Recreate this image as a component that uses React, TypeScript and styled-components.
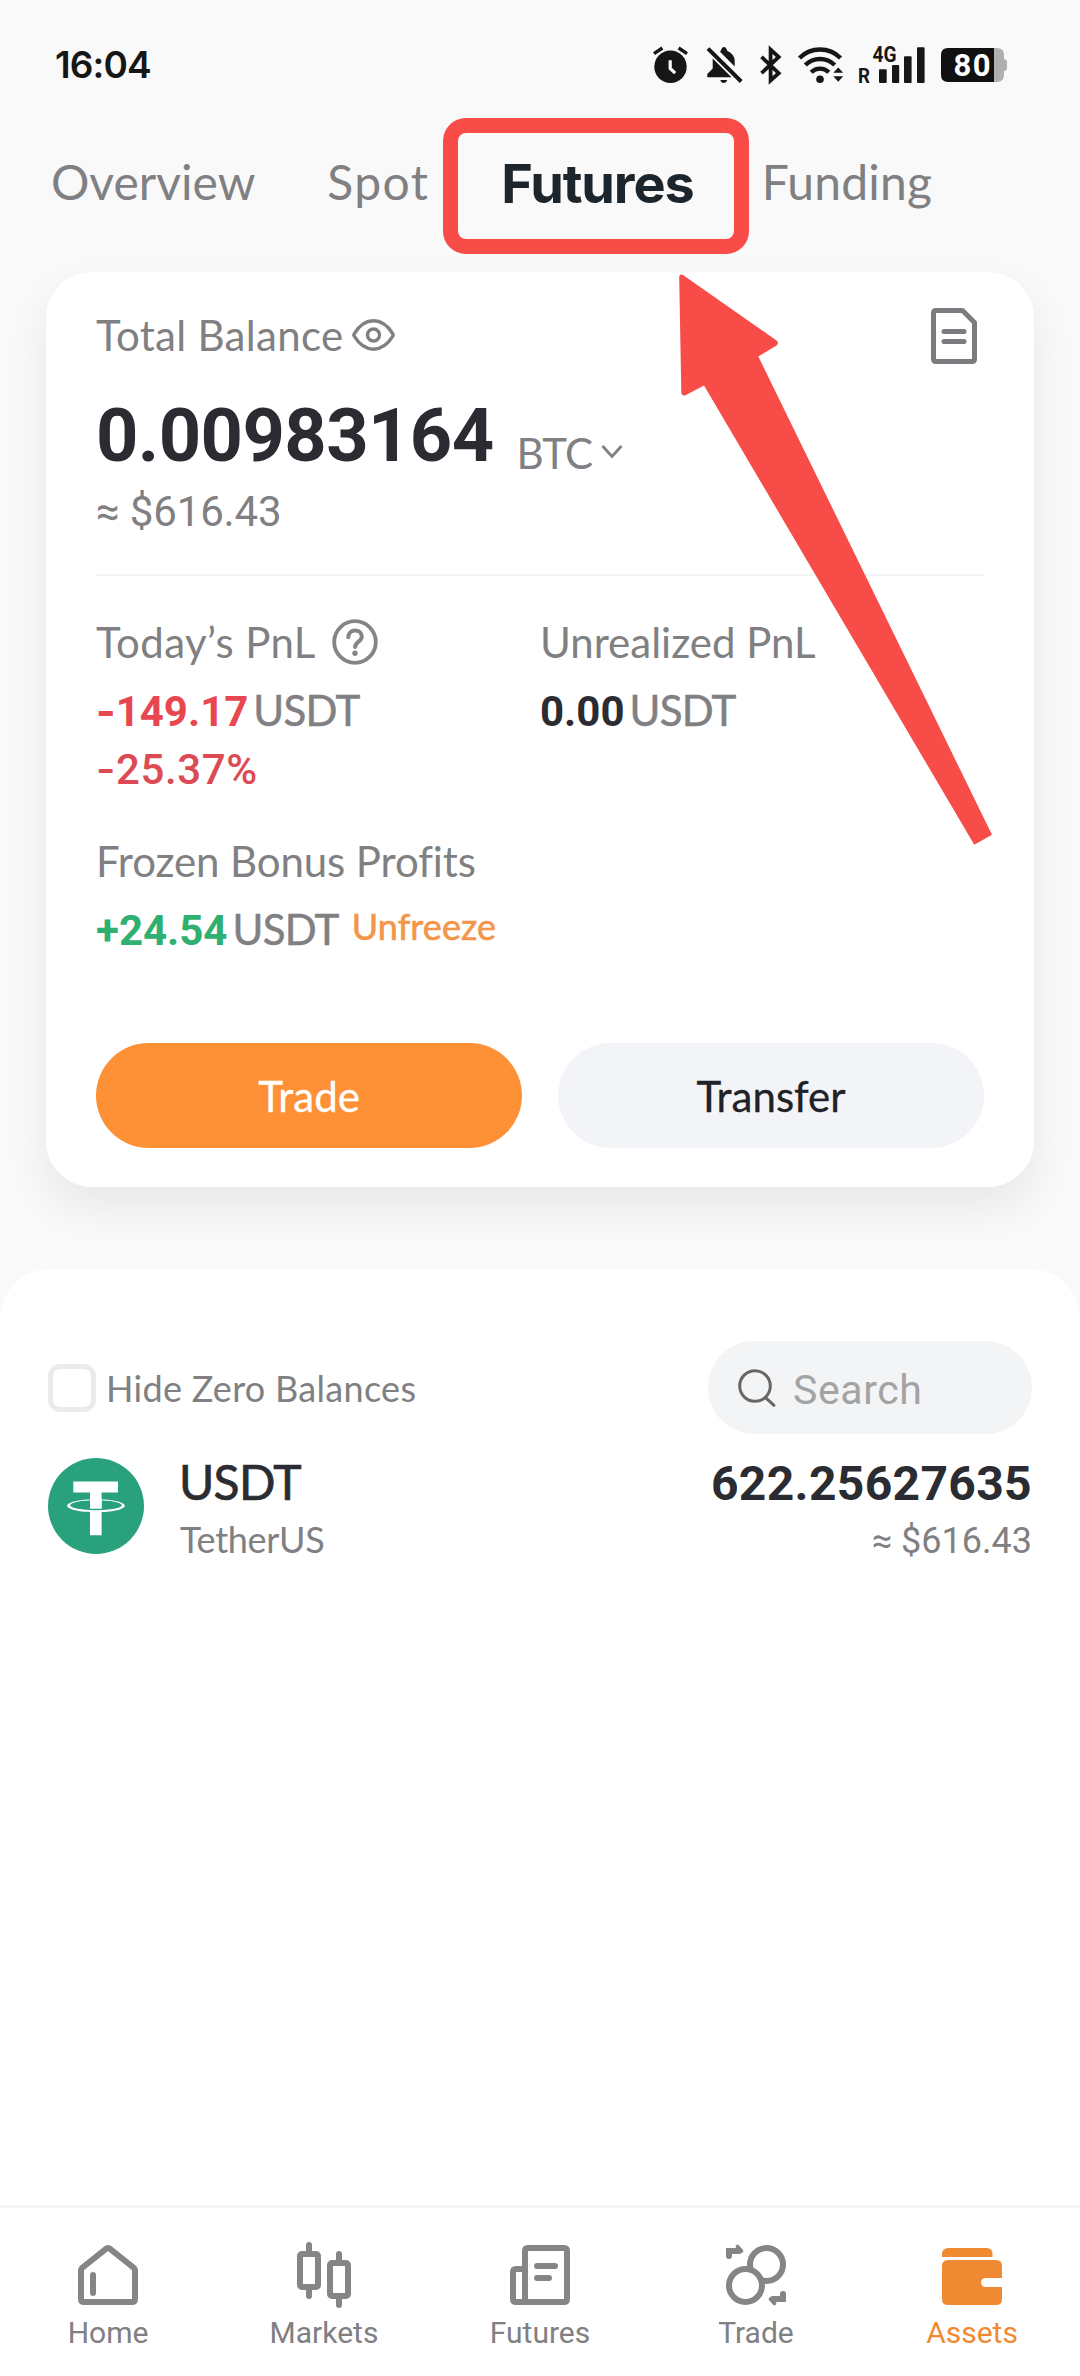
import React from "react";
import styled, { createGlobalStyle } from "styled-components";

const UI = `Lato, "Open Sans", sans-serif`;
const NUM = `Roboto, "Open Sans", sans-serif`;
const STRONG = `Inter, Roboto, sans-serif`;

const color = {
  ink: "#2b2c31",
  muted: "#808082",
  red: "#e8474f",
  green: "#2fb070",
  orange: "#fe9135",
  mark: "#f84c48",
  chip: "#f3f4f6",
};

const GlobalStyle = createGlobalStyle`
  *, *::before, *::after { box-sizing: border-box; }
  body { margin: 0; background: #f9f9f9; }
  button { border: 0; background: none; padding: 0; margin: 0; font: inherit; }
  svg { display: block; flex: none; overflow: visible; }
`;

const Screen = styled.div`
  position: relative;
  width: 1080px;
  height: 2376px;
  display: flex;
  flex-direction: column;
  overflow: hidden;
  background: #f9f9f9;
  font-family: ${UI};
  font-variant-ligatures: none;
  color: ${color.muted};
  white-space: nowrap;
`;

/* ---------- status bar ---------- */

const StatusBar = styled.header`
  flex: none;
  height: 130px;
  padding: 0 73px 0 55px;
  display: flex;
  align-items: center;
  justify-content: space-between;
  color: #161616;
`;

const Clock = styled.time`
  font-family: ${STRONG};
  font-size: 37px;
  font-weight: 600;
  line-height: 44px;
  letter-spacing: -0.9px;
`;

const StatusIcons = styled.div`
  display: flex;
  align-items: center;
`;

const StatusGlyph = styled.svg<{ $before?: number }>`
  margin-left: ${(p) => p.$before ?? 0}px;
`;

/* ---------- tabs ---------- */

const Tabs = styled.nav`
  flex: none;
  height: 104px;
  padding-left: 51px;
  display: flex;
  align-items: center;
  gap: 72px;
`;

const Tab = styled.button<{ $spacing?: number }>`
  font: 400 48px/60px ${UI};
  letter-spacing: ${(p) => p.$spacing ?? 0}px;
  color: ${color.muted};
`;

const ActiveTab = styled.button`
  position: relative;
  margin-right: -4px;
  padding-top: 3px;
  font: 700 54px/60px ${STRONG};
  letter-spacing: -1.1px;
  color: #1d252c;
`;

const HighlightFrame = styled.span`
  position: absolute;
  left: -58px;
  top: -33px;
  width: 306px;
  height: 136px;
  border: 15px solid ${color.mark};
  border-radius: 23px;
`;

/* ---------- balance card ---------- */

const Card = styled.section`
  flex: none;
  margin: 38px 46px 0;
  padding: 36px 50px 38px;
  height: 915px;
  display: flex;
  flex-direction: column;
  background: #fff;
  border-radius: 46px;
  box-shadow: 0 20px 42px rgba(0, 0, 0, 0.07);
`;

const CardHeader = styled.div`
  height: 56px;
  padding-right: 7px;
  display: flex;
  align-items: center;
  justify-content: space-between;
`;

const Label = styled.div<{ $spacing?: number; $gap?: number }>`
  display: flex;
  align-items: center;
  gap: ${(p) => p.$gap ?? 9}px;
  font-family: ${UI};
  font-size: 42px;
  line-height: 50px;
  letter-spacing: ${(p) => p.$spacing ?? 0}px;
`;

const HeaderLabel = styled(Label)`
  padding-bottom: 3px;
`;

const BalanceRow = styled.div`
  margin-top: 32px;
  height: 82px;
  display: flex;
  align-items: flex-end;
`;

const BalanceAmount = styled.div`
  padding-bottom: 2px;
  font: 700 74px/80px ${NUM};
  letter-spacing: -0.6px;
  color: ${color.ink};
`;

const CurrencySelect = styled.button`
  margin-left: 23px;
  display: flex;
  align-items: center;
  gap: 9px;
  font: 400 42px/50px ${UI};
  letter-spacing: -0.8px;
  color: ${color.muted};
`;

const FiatTotal = styled.div`
  margin-top: 9px;
  font: 400 42px/50px ${NUM};
  letter-spacing: -0.15px;
`;

const Divider = styled.hr`
  width: 100%;
  height: 2px;
  margin: 37px 0 41px;
  border: 0;
  background: #f3f4f5;
`;

const PnlGrid = styled.div`
  display: grid;
  grid-template-columns: 1fr 1fr;
`;

const ValueRow = styled.div`
  margin-top: 18px;
  height: 50px;
  display: flex;
  align-items: baseline;
`;

const Value = styled.span<{ $tone: string }>`
  font: 700 42px/50px ${NUM};
  color: ${(p) => p.$tone};
`;

const Unit = styled.span`
  margin-left: 5px;
  font: 400 42px/50px ${UI};
  letter-spacing: -0.7px;
  -webkit-text-stroke: 0.5px;
`;

const Sign = styled.span`
  font-family: ${STRONG};
`;

const Percent = styled.div`
  margin-top: 9px;
  font: 500 42px/50px ${NUM};
  letter-spacing: 0.6px;
  color: #dc4a53;
`;

const BonusBlock = styled.div`
  margin-top: 41px;
`;

const Unfreeze = styled.a`
  align-self: flex-start;
  margin: 3px 0 0 13px;
  font: 400 36px/39px ${UI};
  letter-spacing: 0.1px;
  -webkit-text-stroke: 0.6px;
  color: #f3964a;
`;

const Actions = styled.div`
  margin-top: 89px;
  display: grid;
  grid-template-columns: 1fr 1fr;
  gap: 36px;
`;

const ActionButton = styled.button<{ $primary?: boolean }>`
  height: 105px;
  border-radius: 53px;
  background: ${(p) => (p.$primary ? color.orange : "#f3f4f7")};
  color: ${(p) => (p.$primary ? "#fff" : "#202227")};
  font: 400 42px/50px ${UI};
  -webkit-text-stroke: 0.3px;
`;

/* ---------- asset list ---------- */

const AssetPanel = styled.section`
  flex: 1;
  margin-top: 82px;
  padding: 72px 48px 0;
  background: #fff;
  border-radius: 50px 50px 0 0;
`;

const FilterRow = styled.div`
  height: 93px;
  display: flex;
  align-items: center;
  justify-content: space-between;
`;

const HideZero = styled.label`
  display: flex;
  align-items: center;
  gap: 10px;
  font: 400 36px/44px ${UI};
  letter-spacing: 0.3px;
`;

const CheckBox = styled.span`
  width: 48px;
  height: 48px;
  border: 5px solid #ebebeb;
  border-radius: 12px;
  background: #fff;
`;

const SearchBox = styled.div`
  width: 324px;
  height: 93px;
  padding-left: 30px;
  display: flex;
  align-items: center;
  gap: 17px;
  border-radius: 47px;
  background: ${color.chip};
`;

const SearchHint = styled.span`
  padding-top: 4px;
  font: 400 41px/48px ${NUM};
  letter-spacing: 0.6px;
  color: #a3a3a3;
`;

const AssetRow = styled.div`
  margin-top: 17px;
  height: 110px;
  display: flex;
  align-items: center;
`;

const AssetName = styled.div`
  margin-left: 35px;
  flex: 1;
  display: flex;
  flex-direction: column;
  gap: 5px;
`;

const Ticker = styled.span`
  font: 400 48px/60px ${UI};
  letter-spacing: -0.7px;
  -webkit-text-stroke: 0.7px;
  color: ${color.ink};
`;

const FullName = styled.span`
  padding-left: 1px;
  font: 400 36px/44px ${UI};
  letter-spacing: -0.3px;
`;

const Holdings = styled.div`
  padding-top: 4px;
  display: flex;
  flex-direction: column;
  align-items: flex-end;
  gap: 5px;
`;

const HoldingAmount = styled.span`
  font: 700 48px/60px ${NUM};
  letter-spacing: 0.35px;
  color: ${color.ink};
`;

const HoldingFiat = styled.span`
  font: 400 36px/44px ${NUM};
`;

/* ---------- bottom navigation ---------- */

const BottomNav = styled.nav`
  flex: none;
  height: 171px;
  padding-top: 37px;
  display: grid;
  grid-template-columns: repeat(5, 1fr);
  border-top: 3px solid #f4f4f4;
  background: #fff;
`;

const NavItem = styled.button<{ $active?: boolean }>`
  display: flex;
  flex-direction: column;
  align-items: center;
  gap: 10px;
  font: 400 30px/36px ${NUM};
  color: ${(p) => (p.$active ? "#ef8a33" : color.muted)};
`;

/* ---------- pointer drawn over the card ---------- */

const Pointer = styled.svg`
  position: absolute;
  left: 680px;
  top: 274px;
  pointer-events: none;
`;

/* ---------- icons ---------- */

const AlarmIcon = () => (
  <StatusGlyph width="35" height="36" viewBox="0 0 35 36" fill="none">
    <circle cx="17.5" cy="19.8" r="16.2" fill="#161616" />
    <path d="M1 6.6 9.4 1M34 6.6 25.6 1" stroke="#161616" strokeWidth="3.4" />
    <path d="M17.2 13.3v8.2l5 4.6" stroke="#f9f9f9" strokeWidth="3.2" />
  </StatusGlyph>
);

const BellOffIcon = () => (
  <StatusGlyph $before={19} width="36" height="36" viewBox="0 0 36 36" fill="#161616">
    <path d="M5.7 11.5v10L.3 27v3.3h24.2zM13 4.7C14.5 3.8 14.3 0 17 0s2.5 3.5 4 4.3c4 2.2 6.7 5.2 6.7 9.7v5.6zM13.3 33h6.900c-.6 2-1.800 3-3.500 3s-2.800-1-3.400-3z" />
    <path d="M1 1.600 34.200 34.500" stroke="#161616" strokeWidth="4" />
  </StatusGlyph>
);

const BluetoothIcon = () => (
  <StatusGlyph $before={17} width="22" height="36" viewBox="0 0 22 36" fill="none">
    <path d="M1.500 9.800 18.700 26.200 10.600 33.500V2.500l8.100 7.500L1.500 26.200" stroke="#161616" strokeWidth="3.800" />
  </StatusGlyph>
);

const WifiIcon = () => (
  <StatusGlyph $before={16} width="46" height="36" viewBox="0 0 46 36" fill="#161616">
    <g fill="none" stroke="#161616" strokeWidth="4.400">
      <path d="M1.500 11a29 29 0 0 1 41 0" />
      <path d="M7.300 18a21 21 0 0 1 29.400 0" />
      <path d="M13.200 25.200a12.500 12.500 0 0 1 17.600 0" />
    </g>
    <circle cx="22" cy="32.300" r="3.800" />
    <path d="M35.300 25.800h9.900l-4.950-5.300zM35.300 29.200h9.900l-4.950 5.600z" />
  </StatusGlyph>
);

const SignalIcon = () => (
  <StatusGlyph $before={14} width="67" height="36" viewBox="0 0 67 36" fill="#161616">
    <text x="0" y="35.600" fontFamily="Roboto" fontWeight="700" fontSize="21" textLength="12" lengthAdjust="spacingAndGlyphs">R</text>
    <text x="14.500" y="15.200" fontFamily="Roboto" fontWeight="700" fontSize="21.500" textLength="24" lengthAdjust="spacingAndGlyphs">4G</text>
    <rect x="21" y="22.300" width="7.700" height="13.700" rx="1" />
    <rect x="34" y="18" width="7.200" height="18" rx="1" />
    <rect x="46" y="9.300" width="7.600" height="26.700" rx="1" />
    <rect x="59" y="0.300" width="7.600" height="35.700" rx="1" />
  </StatusGlyph>
);

const BatteryIcon = () => (
  <StatusGlyph $before={16} width="66" height="34" viewBox="0 0 66 34">
    <path d="M53 0h3q7 0 7 7v4q3 .5 3 3v6q0 2.500-3 3v4q0 7-7 7h-3z" fill="#b0b0b0" />
    <path d="M53 0H7Q0 0 0 7v20q0 7 7 7h46z" fill="#111" />
    <text x="12.500" y="28.300" fill="#fff" fontFamily="Roboto" fontWeight="700" fontSize="31" textLength="37">80</text>
  </StatusGlyph>
);

const EyeIcon = () => (
  <svg width="43" height="32" viewBox="0 0 43 32" fill="none" stroke={color.muted} strokeWidth="3.400">
    <path d="M2.200 17.200q-.9-1.200 0-2.400C7 7 13 1.800 21.500 1.800S36 7 40.800 14.800q.9 1.200 0 2.400C36 25 30 30.200 21.500 30.200S7 25 2.200 17.200z" />
    <circle cx="21.500" cy="16" r="6" />
  </svg>
);

const DocumentIcon = () => (
  <svg width="46" height="56" viewBox="0 0 46 56" fill="none" stroke="#7b7c7f" strokeWidth="5" strokeLinejoin="round" strokeLinecap="round">
    <path d="M5 2.500h26.500L43.500 14.500v36.500q0 2.500-2.500 2.500H5q-2.500 0-2.500-2.500V5q0-2.500 2.500-2.500z" />
    <path d="M13 23.500h20M13 33.500h20" />
  </svg>
);

const ChevronDown = () => (
  <svg width="22" height="14" viewBox="0 0 22 14" fill="none" stroke={color.muted} strokeWidth="2.800">
    <path d="M1.500 0 11 10.500 20.500 0" />
  </svg>
);

const HelpIcon = () => (
  <svg width="46" height="46" viewBox="0 0 46 46" fill="none" stroke="#858587" strokeWidth="3.800" strokeLinecap="round">
    <circle cx="23" cy="23" r="20.800" />
    <path d="M16.300 18.300c0-4 2.900-6.800 6.800-6.800s6.700 2.600 6.700 6.200c0 4.800-6.700 5.200-6.700 10.300" strokeWidth="4" />
    <circle cx="23" cy="34.300" r="2.700" fill="#858587" stroke="none" />
  </svg>
);

const SearchIcon = () => (
  <svg width="38" height="38" viewBox="0 0 38 38" fill="none" stroke="#666" strokeWidth="3" strokeLinecap="round">
    <circle cx="17" cy="17" r="15.300" />
    <path d="M27.800 28.800 36 36.300" />
  </svg>
);

const TetherLogo = () => (
  <svg width="96" height="96" viewBox="0 0 96 96">
    <circle cx="48" cy="48" r="48" fill="#28a17c" />
    <path d="M25.300 23.600h44.700v11H53.600v15.900H42V34.600H25.300zM42 53h11.600v24.300H42z" fill="#fff" />
    <path
      fillRule="evenodd"
      fill="#fff"
      d="M48 41.200c16 0 28.800 2.900 28.800 6.500S64 54.200 48 54.200 19.200 51.300 19.200 47.700 32 41.200 48 41.200zM48 42.300c-14.500 0-25.800 2.300-25.800 5S33.500 52.200 48 52.200s25.800-2.200 25.800-4.900S62.500 42.300 48 42.300z"
    />
    <path d="M42 41h11.600v9.500H42z" fill="#fff" />
  </svg>
);

const navStroke = {
  width: 60,
  height: 60,
  viewBox: "0 0 60 60",
  fill: "none",
  stroke: "#858585",
  strokeWidth: 6,
  strokeLinecap: "round" as const,
  strokeLinejoin: "round" as const,
};

const HomeIcon = () => (
  <svg {...navStroke}>
    <path d="M3 25.300Q3 24 4 23L27.300 4.300Q30 2 32.700 4.300L56 23q1 1 1 2.300V54q0 3-3 3H6q-3 0-3-3z" />
    <path d="M15 30v18" />
  </svg>
);

const MarketsIcon = () => (
  <svg {...navStroke}>
    <rect x="6" y="9" width="18" height="33" rx="2" />
    <path d="M15 0v7M15 44v7M45 9v7M45 53v7" />
    <rect x="36" y="18" width="18" height="33" rx="2" />
  </svg>
);

const FuturesIcon = () => (
  <svg {...navStroke}>
    <path d="M15 57V6q0-3 3-3h36q3 0 3 3v48q0 3-3 3H6q-3 0-3-3V27q0-3 3-3h8M27 21h18M27 33h12" />
  </svg>
);

const TradeIcon = () => (
  <svg {...navStroke}>
    <circle cx="40.500" cy="19.500" r="16.500" />
    <circle cx="19.500" cy="40.500" r="16.500" fill="#fff" />
    <path d="M3 11V6h10M57 49v5H47" strokeLinejoin="miter" />
    <path d="M11.500 1.500 15.500 6M48.500 58.500 44.500 54" strokeWidth="3.600" />
  </svg>
);

const AssetsIcon = () => (
  <svg width="60" height="60" viewBox="0 0 60 60" fill="#ef8a33">
    <path d="M0 12V9.500Q0 3 6.500 3h38Q50.500 3 50.500 9v3z" />
    <path d="M6 15h48q6 0 6 6v12H43.500a4.500 4.500 0 0 0 0 9H60v12q0 6-6 6H6q-6 0-6-6V21q0-6 6-6z" />
  </svg>
);

const navItems = [
  { label: "Home", Icon: HomeIcon },
  { label: "Markets", Icon: MarketsIcon },
  { label: "Futures", Icon: FuturesIcon },
  { label: "Trade", Icon: TradeIcon },
  { label: "Assets", Icon: AssetsIcon, active: true },
];

export default function App() {
  return (
    <>
      <GlobalStyle />
      <Screen>
        <StatusBar>
          <Clock>16:04</Clock>
          <StatusIcons>
            <AlarmIcon />
            <BellOffIcon />
            <BluetoothIcon />
            <WifiIcon />
            <SignalIcon />
            <BatteryIcon />
          </StatusIcons>
        </StatusBar>

        <Tabs>
          <Tab>Overview</Tab>
          <Tab $spacing={1.4}>Spot</Tab>
          <ActiveTab>
            Futures
            <HighlightFrame />
          </ActiveTab>
          <Tab $spacing={0.2}>Funding</Tab>
        </Tabs>

        <Card>
          <CardHeader>
            <HeaderLabel $spacing={0.3}>
              Total Balance
              <EyeIcon />
            </HeaderLabel>
            <DocumentIcon />
          </CardHeader>

          <BalanceRow>
            <BalanceAmount>0.00983164</BalanceAmount>
            <CurrencySelect>
              BTC
              <ChevronDown />
            </CurrencySelect>
          </BalanceRow>
          <FiatTotal>≈ $616.43</FiatTotal>

          <Divider />

          <PnlGrid>
            <div>
              <Label $spacing={0.4} $gap={16}>
                Today’s PnL
                <HelpIcon />
              </Label>
              <ValueRow>
                <Value $tone={color.red}>
                  <Sign>-</Sign>149.17
                </Value>
                <Unit>USDT</Unit>
              </ValueRow>
              <Percent>
                <Sign>-</Sign>25.37%
              </Percent>
            </div>
            <div>
              <Label>Unrealized PnL</Label>
              <ValueRow>
                <Value $tone={color.ink}>0.00</Value>
                <Unit>USDT</Unit>
              </ValueRow>
            </div>
          </PnlGrid>

          <BonusBlock>
            <Label $spacing={-0.1}>Frozen Bonus Profits</Label>
            <ValueRow>
              <Value $tone={color.green}>+24.54</Value>
              <Unit>USDT</Unit>
              <Unfreeze>Unfreeze</Unfreeze>
            </ValueRow>
          </BonusBlock>

          <Actions>
            <ActionButton $primary>Trade</ActionButton>
            <ActionButton>Transfer</ActionButton>
          </Actions>
        </Card>

        <AssetPanel>
          <FilterRow>
            <HideZero>
              <CheckBox />
              Hide Zero Balances
            </HideZero>
            <SearchBox>
              <SearchIcon />
              <SearchHint>Search</SearchHint>
            </SearchBox>
          </FilterRow>

          <AssetRow>
            <TetherLogo />
            <AssetName>
              <Ticker>USDT</Ticker>
              <FullName>TetherUS</FullName>
            </AssetName>
            <Holdings>
              <HoldingAmount>622.25627635</HoldingAmount>
              <HoldingFiat>≈ $616.43</HoldingFiat>
            </Holdings>
          </AssetRow>
        </AssetPanel>

        <BottomNav>
          {navItems.map(({ label, Icon, active }) => (
            <NavItem key={label} $active={active}>
              <Icon />
              {label}
            </NavItem>
          ))}
        </BottomNav>

        <Pointer width="312" height="572" viewBox="0 0 312 572" fill={color.mark}>
          <path d="M-.8 3.500Q-.8-.5 3 1L96.500 66.500Q99.500 69 96.500 71.500L78.300 82.400 312 560.800 294.300 570.800 24 111.500 5.500 121.200Q1.500 122.500 1.300 118z" />
        </Pointer>
      </Screen>
    </>
  );
}
